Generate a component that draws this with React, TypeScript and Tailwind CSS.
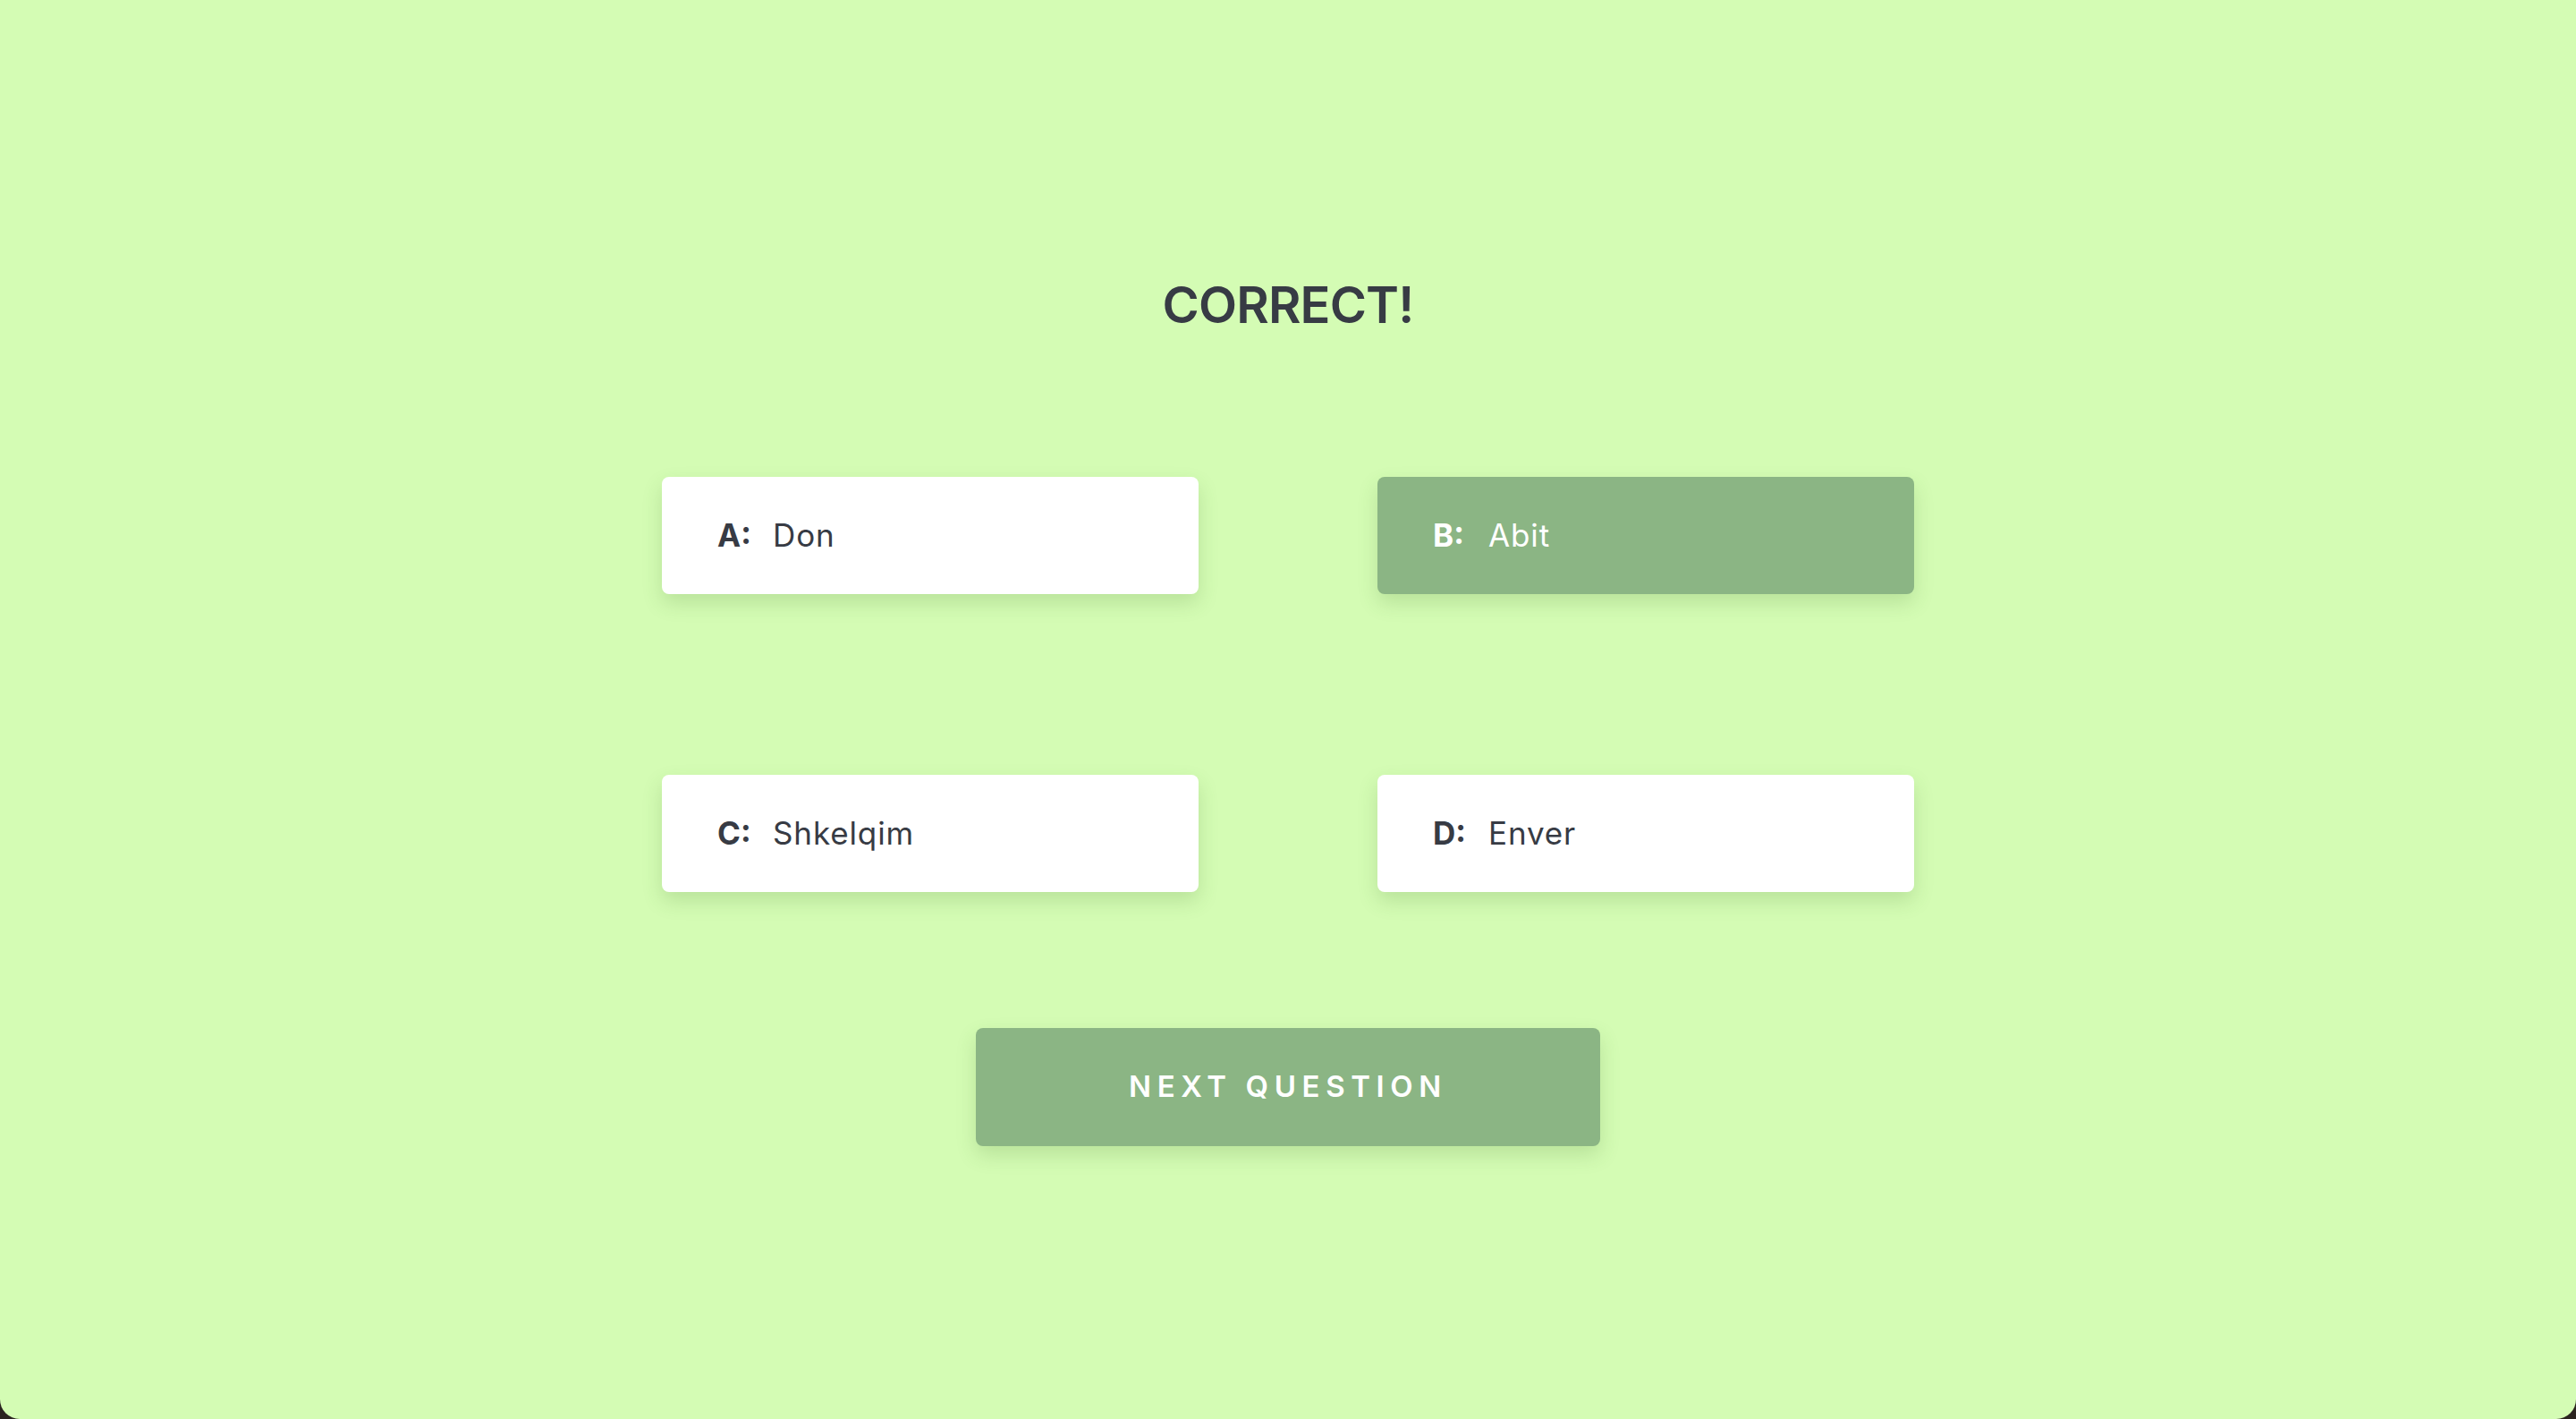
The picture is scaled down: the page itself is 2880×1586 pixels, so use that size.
const options = [
  { key: "A", text: "Don", correct: false },
  { key: "B", text: "Abit", correct: true },
  { key: "C", text: "Shkelqim", correct: false },
  { key: "D", text: "Enver", correct: false },
];

const App = () => {
  return (
    <div className="min-h-screen bg-[#2b2420] font-['Inter',sans-serif]">
      <div className="flex h-[1586px] w-full flex-col items-center rounded-b-[22px] bg-[#d4fcb4]">
        <h1 className="mt-[313px] text-[56px] font-semibold leading-none tracking-[-0.015em] text-[#373b44]">CORRECT!</h1>

        <div className="mt-[164px] grid grid-cols-[600px_600px] gap-x-[200px] gap-y-[202px]">
          {options.map((option) => (
            <button
              key={option.key}
              className={`flex h-[131px] items-center rounded-[8px] px-[62px] text-left text-[35px] shadow-[0_10px_22px_rgba(60,110,40,0.18)] ${
                option.correct ? "bg-[#8bb584] text-white" : "bg-white text-[#373b44]"
              }`}
            >
              <span className="w-[62px] font-bold">{option.key}:</span>
              <span className="font-normal tracking-[0.025em]">{option.text}</span>
            </button>
          ))}
        </div>

        <button className="mt-[152px] flex h-[132px] w-[698px] items-center justify-center rounded-[8px] bg-[#8bb584] text-[33px] font-semibold uppercase tracking-[0.2em] text-white shadow-[0_10px_22px_rgba(60,110,40,0.18)]">
          Next Question
        </button>
      </div>
    </div>
  );
};

export default App;
